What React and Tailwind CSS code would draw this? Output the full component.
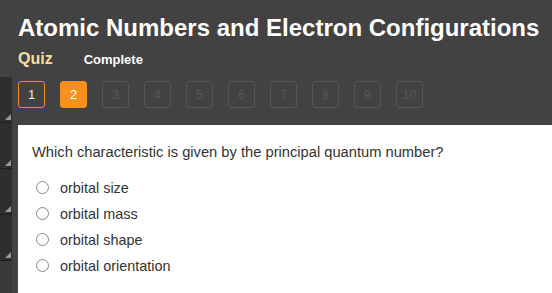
import React from 'react';

const options = ['orbital size', 'orbital mass', 'orbital shape', 'orbital orientation'];

function Strip() {
  return (
    <div className="w-[12px] shrink-0 pt-[77px] flex flex-col">
      {[0, 1, 2, 3].map(i => (
        <div key={i} className="relative h-[46px] bg-[#2e2e2e] border-b border-[#1e1e1e]">
          <div className="absolute right-[1px] bottom-[2px] w-0 h-0 border-l-[6px] border-l-transparent border-b-[6px] border-b-[#9a9a9a]" />
        </div>
      ))}
      <div className="flex-1 bg-[#3a3a3a]" />
    </div>
  );
}

export default function App() {
  return (
    <div className="w-[552px] h-[293px] overflow-hidden bg-[#424242] flex" style={{ fontFamily: '"Liberation Sans", Arial, sans-serif' }}>
      <Strip />
      <div className="flex-1 flex flex-col pl-[6px]">
        <h1 className="text-[24px] font-bold text-white leading-none mt-[16px] whitespace-nowrap">
          Atomic Numbers and Electron Configurations
        </h1>
        <div className="flex items-baseline mt-[11px] leading-none">
          <span className="text-[16px] font-bold text-[#f7dfa0]">Quiz</span>
          <span className="text-[13px] font-bold text-white ml-[31px]">Complete</span>
        </div>
        <div className="flex gap-[15px] mt-[14px]">
          {[1, 2, 3, 4, 5, 6, 7, 8, 9, 10].map(n => (
            <div
              key={n}
              className={`w-[27px] h-[27px] rounded-[3px] flex items-center justify-center text-[13px] border ${
                n === 1
                  ? 'border-[#f08a24] text-[#e6f0ff]'
                  : n === 2
                  ? 'bg-[#f7901e] border-[#f7901e] text-white'
                  : 'border-[#565656] text-[#565656]'
              }`}
            >
              {n}
            </div>
          ))}
        </div>
        <div className="flex-1 bg-white mt-[17px] pl-[14px] pt-[20px]">
          <p className="text-[14.7px] text-[#333] leading-none">
            Which characteristic is given by the principal quantum number?
          </p>
          <div className="mt-[20px] flex flex-col gap-[10px]">
            {options.map(o => (
              <label key={o} className="flex items-center text-[14.4px] text-[#333] leading-none h-[16px]">
                <span className="w-[13px] h-[13px] rounded-full border border-[#888] bg-white ml-[4px] mr-[11px]" />
                {o}
              </label>
            ))}
          </div>
        </div>
      </div>
    </div>
  );
}
